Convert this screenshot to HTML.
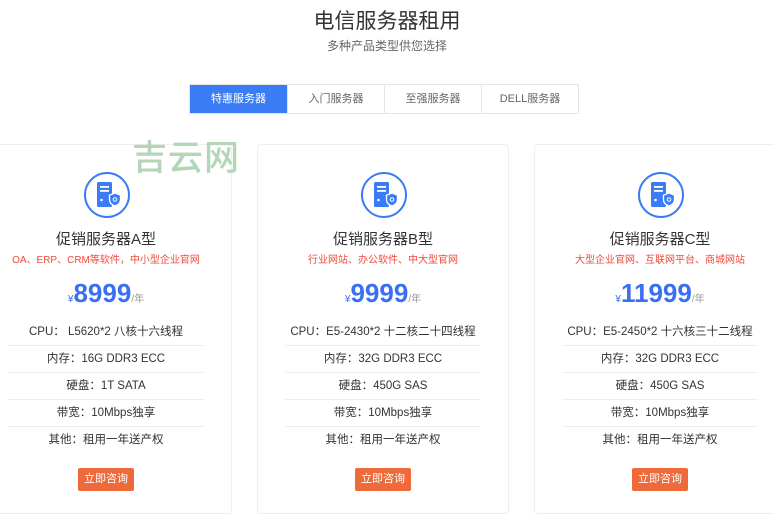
<!DOCTYPE html>
<html><head><meta charset="utf-8"><style>
*{margin:0;padding:0;box-sizing:border-box}
body{width:774px;height:500px;overflow:hidden;background:#fff;font-family:"Liberation Sans","Noto Sans CJK SC",sans-serif;color:#333;position:relative}
.t{position:absolute;top:5px;left:0;width:774px;text-align:center;font-size:21px;color:#333}
.st{position:absolute;top:37px;left:0;width:774px;text-align:center;font-size:12px;color:#666}
.tabs{position:absolute;top:84px;left:189px;display:flex;border:1px solid #e5e5e5}
.tabs div{width:97px;height:28px;line-height:28px;text-align:center;font-size:11px;color:#666;border-left:1px solid #e5e5e5}
.tabs div:first-child{border-left:none;background:#3a7cf5;color:#fff}
.wm{position:absolute;left:132px;top:130px;font-size:35px;color:#b3d5b8;letter-spacing:1px;font-family:"Noto Sans CJK SC",sans-serif;font-weight:500}
.card{position:absolute;top:144px;width:252px;height:370px;border:1px solid #eee;border-radius:4px;background:#fff;text-align:center}
.ic{position:absolute;left:103px;top:27px;width:46px;height:46px;border:2px solid #3a7cf5;border-radius:50%}
.ct{position:absolute;top:83px;left:0;width:100%;font-size:15px;color:#333}
.cs{position:absolute;top:106px;left:0;width:100%;font-size:10px;color:#f04a3a}
.pr{position:absolute;top:133px;left:0;width:100%;color:#3a6ff5;font-size:26px;font-weight:bold}
.pr small{font-size:10px;font-weight:normal}
.pr span{font-size:10px;font-weight:normal;color:#999}
.rows{position:absolute;top:174px}
.rows div{height:27px;line-height:27px;font-size:11.5px;color:#333;border-bottom:1px solid #eee}
.rows div:last-child{border-bottom:none}
.btn{position:absolute;top:323px;left:97px;width:56px;height:23px;line-height:23px;background:#ee6a3a;color:#fff;font-size:11px;border-radius:2px}
</style></head><body>
<div class="t">电信服务器租用</div>
<div class="st">多种产品类型供您选择</div>
<div class="tabs"><div>特惠服务器</div><div>入门服务器</div><div>至强服务器</div><div>DELL服务器</div></div>

<div class="card" style="left:-20px">
<div class="ic"><svg width="42" height="42" viewBox="0 0 42 42"><rect x="11" y="8" width="15" height="25" rx="1.5" fill="#3a7cf5"/><rect x="14" y="12" width="9" height="1.8" fill="#fff"/><rect x="14" y="16" width="9" height="1.8" fill="#fff"/><circle cx="15.5" cy="26" r="1.3" fill="#fff"/><path d="M29 19l5.5 2.2v4.3c0 3.2-2.2 5.3-5.5 6.5-3.3-1.2-5.5-3.3-5.5-6.5v-4.3z" fill="#3a7cf5" stroke="#fff" stroke-width="1.3"/><circle cx="29" cy="25.5" r="1.8" fill="none" stroke="#fff" stroke-width="1"/></svg></div>
<div class="ct">促销服务器A型</div>
<div class="cs">OA、ERP、CRM等软件，中小型企业官网</div>
<div class="pr"><small>¥</small>8999<span>/年</span></div>
<div class="rows" style="left:27px;right:27px"><div>CPU： L5620*2 八核十六线程</div><div>内存：16G DDR3 ECC</div><div>硬盘：1T SATA</div><div>带宽：10Mbps独享</div><div>其他：租用一年送产权</div></div>
<div class="btn">立即咨询</div>
</div>

<div class="card" style="left:257px">
<div class="ic"><svg width="42" height="42" viewBox="0 0 42 42"><rect x="11" y="8" width="15" height="25" rx="1.5" fill="#3a7cf5"/><rect x="14" y="12" width="9" height="1.8" fill="#fff"/><rect x="14" y="16" width="9" height="1.8" fill="#fff"/><circle cx="15.5" cy="26" r="1.3" fill="#fff"/><path d="M29 19l5.5 2.2v4.3c0 3.2-2.2 5.3-5.5 6.5-3.3-1.2-5.5-3.3-5.5-6.5v-4.3z" fill="#3a7cf5" stroke="#fff" stroke-width="1.3"/><circle cx="29" cy="25.5" r="1.8" fill="none" stroke="#fff" stroke-width="1"/></svg></div>
<div class="ct">促销服务器B型</div>
<div class="cs">行业网站、办公软件、中大型官网</div>
<div class="pr"><small>¥</small>9999<span>/年</span></div>
<div class="rows" style="left:27px;right:27px"><div>CPU：E5-2430*2 十二核二十四线程</div><div>内存：32G DDR3 ECC</div><div>硬盘：450G SAS</div><div>带宽：10Mbps独享</div><div>其他：租用一年送产权</div></div>
<div class="btn">立即咨询</div>
</div>

<div class="card" style="left:534px">
<div class="ic"><svg width="42" height="42" viewBox="0 0 42 42"><rect x="11" y="8" width="15" height="25" rx="1.5" fill="#3a7cf5"/><rect x="14" y="12" width="9" height="1.8" fill="#fff"/><rect x="14" y="16" width="9" height="1.8" fill="#fff"/><circle cx="15.5" cy="26" r="1.3" fill="#fff"/><path d="M29 19l5.5 2.2v4.3c0 3.2-2.2 5.3-5.5 6.5-3.3-1.2-5.5-3.3-5.5-6.5v-4.3z" fill="#3a7cf5" stroke="#fff" stroke-width="1.3"/><circle cx="29" cy="25.5" r="1.8" fill="none" stroke="#fff" stroke-width="1"/></svg></div>
<div class="ct">促销服务器C型</div>
<div class="cs">大型企业官网、互联网平台、商城网站</div>
<div class="pr"><small>¥</small>11999<span>/年</span></div>
<div class="rows" style="left:27px;right:27px"><div>CPU：E5-2450*2 十六核三十二线程</div><div>内存：32G DDR3 ECC</div><div>硬盘：450G SAS</div><div>带宽：10Mbps独享</div><div>其他：租用一年送产权</div></div>
<div class="btn">立即咨询</div>
</div>

<div class="wm">吉云网</div>
</body></html>
